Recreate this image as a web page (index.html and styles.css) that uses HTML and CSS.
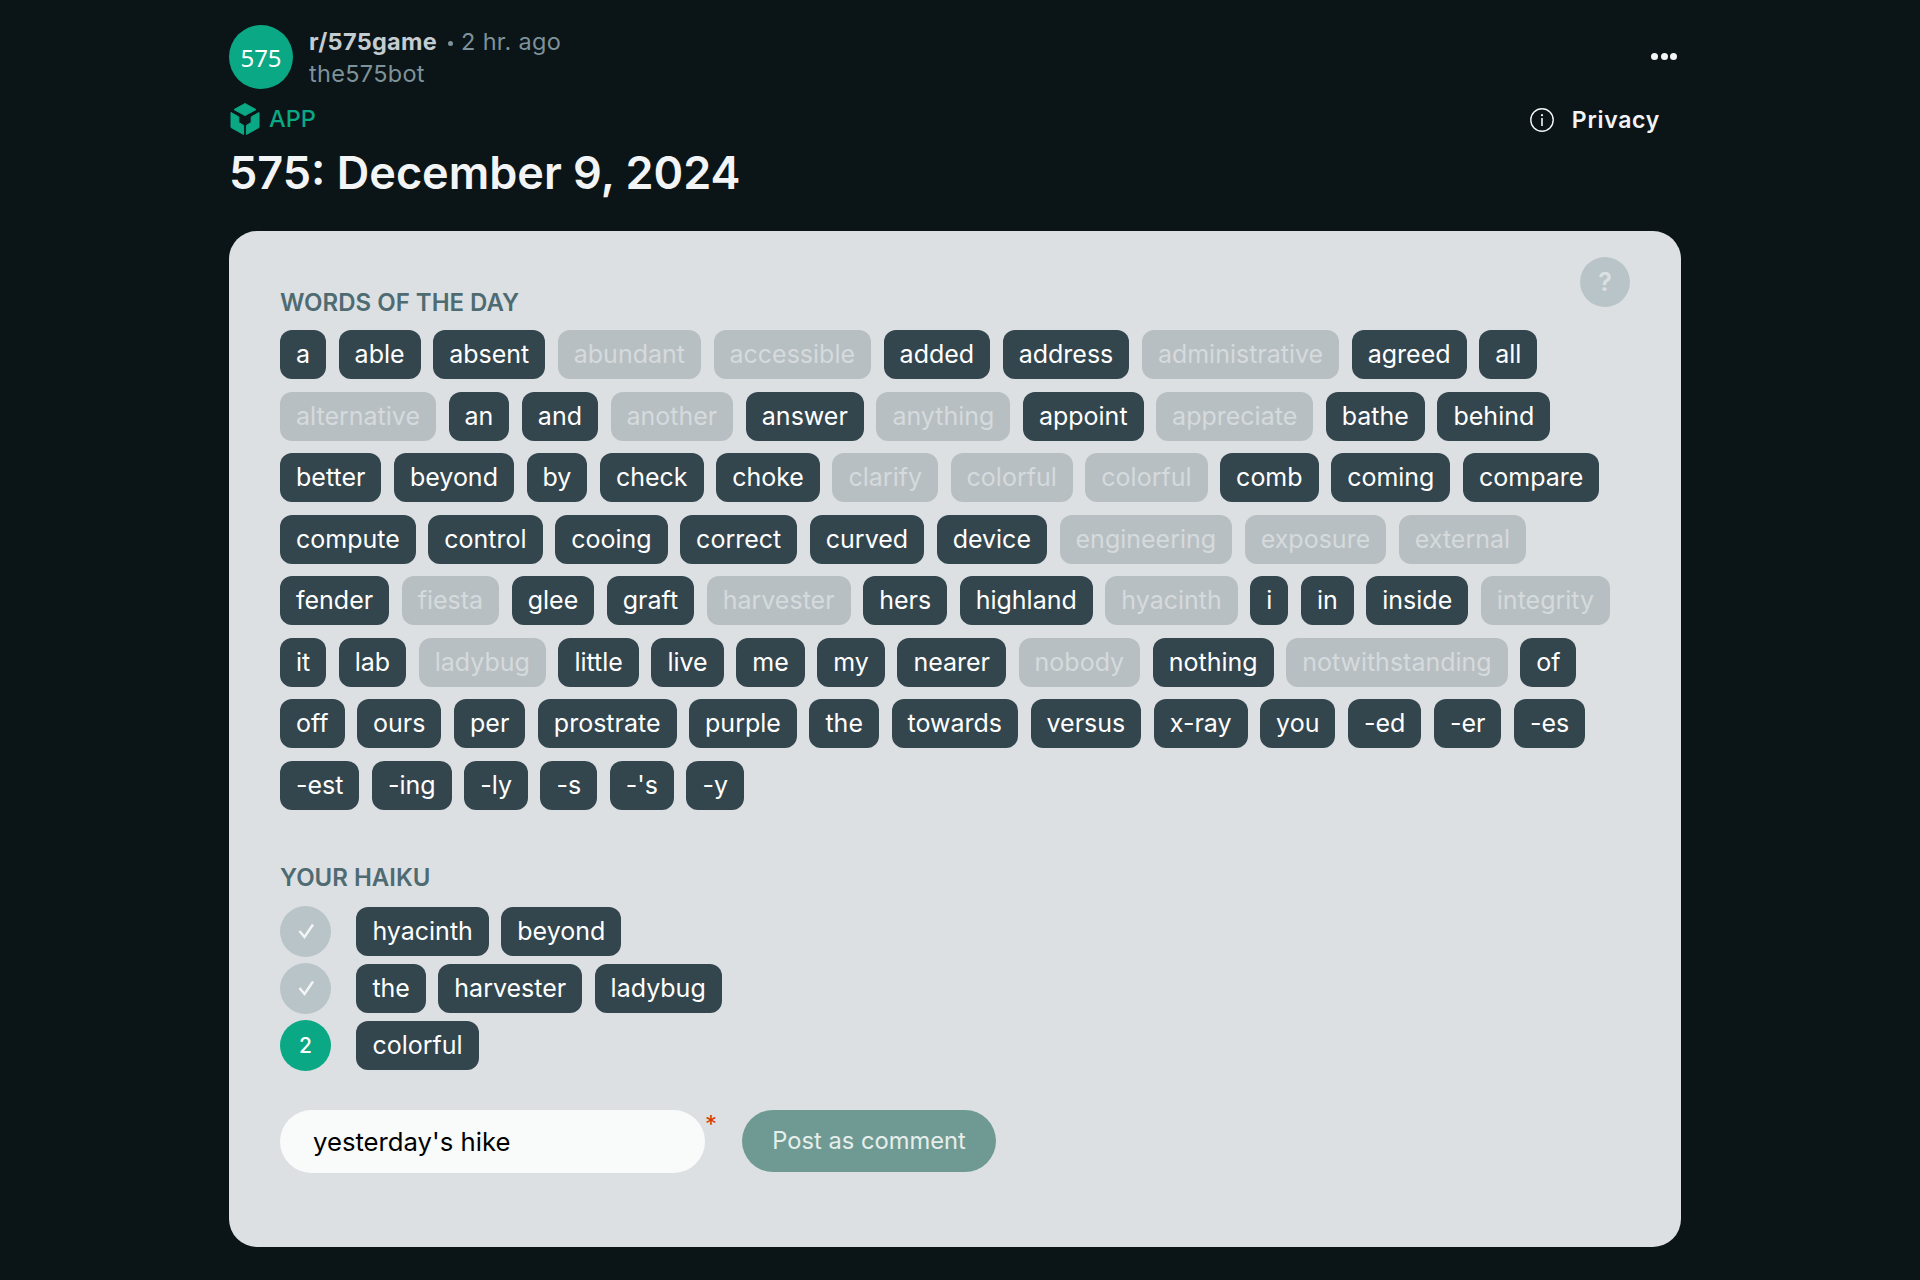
FILE: index.html
```html
<!DOCTYPE html>
<html lang="en">
  <head>
    <meta charset="UTF-8" />
    <title>575: December 9, 2024</title>
    <link rel="stylesheet" href="styles.css">
  </head>
  <body>
    <div class="post">
      <div class="post-head">
        <div class="post-meta">
          <div class="byline">
            <div class="avatar">575</div>
            <div class="byline-text">
              <div class="byline-top"><b>r/575game</b><span class="dot"></span><span>2 hr. ago</span></div>
              <div class="byline-user">the575bot</div>
            </div>
          </div>
          <div class="app-tag">
            <svg class="app-icon" viewBox="0 0 30 32" width="30" height="32">
              <g fill="#0aa884" stroke="#0aa884" stroke-width="1" stroke-linejoin="round">
                <path d="M15 .5 L26 6.6 L15 12.6 L4 6.6 Z" />
                <path d="M1 9.5 L8.8 13.9 V19.5 L13.6 22.4 V31.5 L1 24.5 Z" />
                <path d="M29 9.5 L21.2 13.9 V19.5 L16.4 22.4 V31.5 L29 24.5 Z" />
              </g>
            </svg>
            <span>APP</span>
          </div>
        </div>
        <div class="post-actions">
          <div class="dots"><i></i><i></i><i></i></div>
          <div class="privacy">
            <svg viewBox="0 0 24 24" width="24" height="24">
              <circle cx="12" cy="12" r="11.2" fill="none" stroke="#f2f4f5" stroke-width="1.4" />
              <circle cx="12" cy="7.2" r="1.1" fill="#f2f4f5" />
              <rect x="11.2" y="10" width="1.6" height="8" fill="#f2f4f5" />
            </svg>
            <span>Privacy</span>
          </div>
        </div>
      </div>
      <h1>575: December 9, 2024</h1>

      <div class="card">
        <div class="help">?</div>
        <h2>WORDS OF THE DAY</h2>
        <div class="words">
          <span class="chip">a</span>
          <span class="chip">able</span>
          <span class="chip">absent</span>
          <span class="chip used">abundant</span>
          <span class="chip used">accessible</span>
          <span class="chip">added</span>
          <span class="chip">address</span>
          <span class="chip used">administrative</span>
          <span class="chip">agreed</span>
          <span class="chip">all</span>
          <span class="chip used">alternative</span>
          <span class="chip">an</span>
          <span class="chip">and</span>
          <span class="chip used">another</span>
          <span class="chip">answer</span>
          <span class="chip used">anything</span>
          <span class="chip">appoint</span>
          <span class="chip used">appreciate</span>
          <span class="chip">bathe</span>
          <span class="chip">behind</span>
          <span class="chip">better</span>
          <span class="chip">beyond</span>
          <span class="chip">by</span>
          <span class="chip">check</span>
          <span class="chip">choke</span>
          <span class="chip used">clarify</span>
          <span class="chip used">colorful</span>
          <span class="chip used">colorful</span>
          <span class="chip">comb</span>
          <span class="chip">coming</span>
          <span class="chip">compare</span>
          <span class="chip">compute</span>
          <span class="chip">control</span>
          <span class="chip">cooing</span>
          <span class="chip">correct</span>
          <span class="chip">curved</span>
          <span class="chip">device</span>
          <span class="chip used">engineering</span>
          <span class="chip used">exposure</span>
          <span class="chip used">external</span>
          <span class="chip">fender</span>
          <span class="chip used">fiesta</span>
          <span class="chip">glee</span>
          <span class="chip">graft</span>
          <span class="chip used">harvester</span>
          <span class="chip">hers</span>
          <span class="chip">highland</span>
          <span class="chip used">hyacinth</span>
          <span class="chip">i</span>
          <span class="chip">in</span>
          <span class="chip">inside</span>
          <span class="chip used">integrity</span>
          <span class="chip">it</span>
          <span class="chip">lab</span>
          <span class="chip used">ladybug</span>
          <span class="chip">little</span>
          <span class="chip">live</span>
          <span class="chip">me</span>
          <span class="chip">my</span>
          <span class="chip">nearer</span>
          <span class="chip used">nobody</span>
          <span class="chip">nothing</span>
          <span class="chip used">notwithstanding</span>
          <span class="chip">of</span>
          <span class="chip">off</span>
          <span class="chip">ours</span>
          <span class="chip">per</span>
          <span class="chip">prostrate</span>
          <span class="chip">purple</span>
          <span class="chip">the</span>
          <span class="chip">towards</span>
          <span class="chip">versus</span>
          <span class="chip">x-ray</span>
          <span class="chip">you</span>
          <span class="chip">-ed</span>
          <span class="chip">-er</span>
          <span class="chip">-es</span>
          <span class="chip">-est</span>
          <span class="chip">-ing</span>
          <span class="chip">-ly</span>
          <span class="chip">-s</span>
          <span class="chip">-'s</span>
          <span class="chip">-y</span>
        </div>

        <h2 class="haiku-title">YOUR HAIKU</h2>
        <div class="haiku">
          <div class="line">
            <div class="badge done">
              <svg viewBox="0 0 16 16" width="16" height="16"><path d="M1.5 8 L6.5 14 L15 1.5" fill="none" stroke="#f4f6f6" stroke-width="2.4" /></svg>
            </div>
            <span class="chip">hyacinth</span>
            <span class="chip">beyond</span>
          </div>
          <div class="line">
            <div class="badge done">
              <svg viewBox="0 0 16 16" width="16" height="16"><path d="M1.5 8 L6.5 14 L15 1.5" fill="none" stroke="#f4f6f6" stroke-width="2.4" /></svg>
            </div>
            <span class="chip">the</span>
            <span class="chip">harvester</span>
            <span class="chip">ladybug</span>
          </div>
          <div class="line">
            <div class="badge current">2</div>
            <span class="chip">colorful</span>
          </div>
        </div>

        <div class="comment-row">
          <div class="title-input">yesterday's hike</div>
          <span class="required">*</span>
          <button type="button">Post as comment</button>
        </div>
      </div>
    </div>
  </body>
</html>
```

FILE: styles.css
```css
body {
  margin: 0;
  background-color: #0b1416;
  font-family: "Inter", "Liberation Sans", sans-serif;
  color: #fff;
}

.post {
  width: 1452px;
  margin-left: 229px;
  padding-top: 25px;
}

.post-head {
  display: flex;
  justify-content: space-between;
}

.byline {
  display: flex;
  align-items: flex-start;
  gap: 16px;
}

.avatar {
  width: 64px;
  height: 64px;
  border-radius: 50%;
  background-color: #0aa884;
  display: flex;
  align-items: center;
  justify-content: center;
  font-family: "Noto Sans", sans-serif;
  font-size: 24px;
}

.byline-text {
  padding-top: 1px;
  font-size: 23.5px;
  line-height: 32px;
  color: #7e929a;
  letter-spacing: 0.3px;
}

.byline-top b {
  font-weight: 700;
  color: #c3ccd1;
}

.dot {
  display: inline-block;
  width: 5px;
  height: 5px;
  border-radius: 50%;
  background-color: #7e929a;
  margin: 0 8px 0 11px;
  vertical-align: middle;
}

.app-tag {
  display: flex;
  align-items: center;
  gap: 9px;
  margin: 13px 0 0 1px;
  color: #0aa884;
  font-size: 23.5px;
  font-weight: 500;
  line-height: 32px;
}

.post-actions {
  display: flex;
  flex-direction: column;
  align-items: flex-end;
}

.dots {
  display: flex;
  gap: 2.5px;
  margin: 28px 4px 0 0;
}

.dots i {
  width: 7px;
  height: 7px;
  border-radius: 50%;
  background-color: #f2f4f5;
}

.privacy {
  display: flex;
  align-items: center;
  gap: 18px;
  margin: 46px 21px 0 0;
  font-size: 23px;
  font-weight: 600;
  letter-spacing: 0.7px;
  color: #f2f4f5;
}

h1 {
  margin: 10px 0 0;
  font-size: 45px;
  line-height: 56px;
  font-weight: 600;
  color: #f2f4f5;
}

.card {
  position: relative;
  box-sizing: border-box;
  height: 1016px;
  margin-top: 30px;
  padding: 57px 50px 0 51px;
  background-color: #dce0e3;
  border-radius: 28px;
}

.help {
  position: absolute;
  top: 26px;
  right: 51px;
  width: 50px;
  height: 50px;
  border-radius: 50%;
  background-color: #b9c4c8;
  color: #dce0e3;
  font-size: 25px;
  font-weight: 600;
  display: flex;
  align-items: center;
  justify-content: center;
}

h2 {
  margin: 0;
  font-size: 24px;
  line-height: 30px;
  font-weight: 600;
  color: #4f6b72;
}

.words {
  display: flex;
  flex-wrap: wrap;
  gap: 12.5px 12.55px;
  margin-top: 12px;
}

.chip {
  box-sizing: border-box;
  height: 49px;
  padding: 0 16px;
  border-radius: 12px;
  background-color: #33454d;
  color: #fff;
  font-size: 25px;
  line-height: 49px;
  white-space: nowrap;
}

.chip.used {
  background-color: #b8bfc2;
  color: #d5dadd;
}

.haiku-title {
  margin-top: 53px;
}

.haiku {
  margin-top: 10px;
}

.line {
  display: flex;
  align-items: center;
  gap: 12.4px;
  height: 57px;
}

.badge {
  width: 51px;
  height: 51px;
  margin-right: 13px;
  border-radius: 50%;
  display: flex;
  align-items: center;
  justify-content: center;
  font-size: 21px;
  font-weight: 500;
}

.badge.done {
  background-color: #b9c4c8;
}

.badge.current {
  background-color: #0aa884;
}

.comment-row {
  display: flex;
  align-items: flex-start;
  margin-top: 36px;
}

.title-input {
  box-sizing: border-box;
  width: 425px;
  height: 63px;
  padding-left: 33px;
  border-radius: 32px;
  background-color: #f9fbfa;
  color: #000;
  font-size: 25.7px;
  line-height: 63px;
}

.required {
  width: 37px;
  color: #d93a00;
  font-size: 24px;
  line-height: 30px;
  box-sizing: border-box;
}

button {
  width: 254px;
  height: 62px;
  border: none;
  border-radius: 31px;
  background-color: #6f9a93;
  color: #e6eeeb;
  font-family: inherit;
  font-size: 23.7px;
  padding: 0;
}
```
